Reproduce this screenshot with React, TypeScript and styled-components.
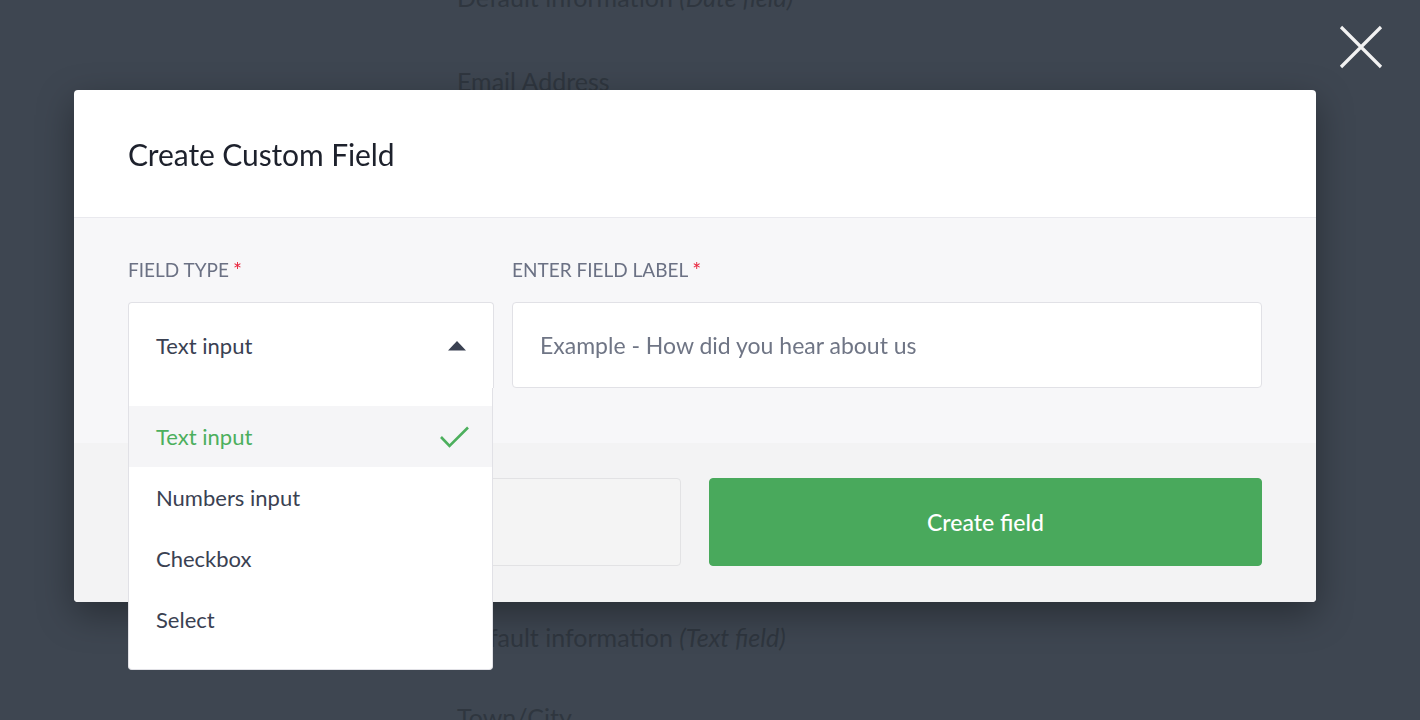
import React from "react";
import styled, { createGlobalStyle } from "styled-components";

const GlobalStyle = createGlobalStyle`
  html, body { margin: 0; padding: 0; }
  body {
    background: #3e4651;
    font-family: Lato, "Open Sans", sans-serif;
    overflow: hidden;
    width: 1420px;
    height: 720px;
  }
  * { box-sizing: border-box; }
`;

const Page = styled.div`
  display: flex;
  flex-direction: column;
  padding-left: 457px;
  margin-top: -17px;
`;

const BgLine = styled.div<{ $gap: number }>`
  font-size: 25px;
  line-height: 28px;
  color: #2f363f;
  margin-top: ${(p) => p.$gap}px;
  em { font-style: italic; }
`;

const Overlay = styled.div`
  position: fixed;
  inset: 0;
  display: flex;
  justify-content: flex-start;
  align-items: flex-start;
  padding: 90px 0 0 74px;
`;

const CloseButton = styled.button`
  position: absolute;
  top: 24px;
  right: 36px;
  width: 46px;
  height: 46px;
  padding: 0;
  border: none;
  background: transparent;
  display: flex;
  align-items: center;
  justify-content: center;
`;

const Modal = styled.div`
  width: 1242px;
  background: #fff;
  border-radius: 4px;
  box-shadow: 0 12px 36px rgba(0, 0, 0, 0.35);
  display: flex;
  flex-direction: column;
`;

const Header = styled.div`
  height: 128px;
  padding: 0 54px;
  display: flex;
  align-items: center;
  border-bottom: 1px solid #e9e9ee;
`;

const Title = styled.h2`
  margin: 0;
  font-size: 30px;
  font-weight: 400;
  color: #1d212c;
  letter-spacing: -0.1px;
`;

const Body = styled.div`
  background: #f7f7f9;
  padding: 42px 54px 55px;
  display: grid;
  grid-template-columns: 366px 750px;
  column-gap: 18px;
`;

const FieldColumn = styled.div`
  display: flex;
  flex-direction: column;
  gap: 22px;
`;

const Label = styled.label`
  font-size: 19px;
  line-height: 20px;
  color: #6b7184;
  text-transform: uppercase;
  display: flex;
  gap: 4px;
`;

const Req = styled.span`
  color: #e8253d;
  font-size: 21px;
`;

const SelectWrap = styled.div`
  position: relative;
`;

const SelectBox = styled.div`
  height: 86px;
  background: #fff;
  border: 1px solid #e1e1e6;
  border-bottom: none;
  border-radius: 4px 4px 0 0;
  padding: 0 27px 0 27px;
  display: flex;
  align-items: center;
  justify-content: space-between;
  font-size: 22px;
  color: #3a4152;
`;

const Dropdown = styled.ul`
  position: absolute;
  top: 100%;
  left: 0;
  width: 365px;
  margin: 0;
  padding: 18px 0 19px;
  list-style: none;
  background: #fff;
  border: 1px solid #e1e1e6;
  border-top: none;
  border-radius: 0 0 4px 4px;
  z-index: 5;
`;

const Option = styled.li<{ $active?: boolean }>`
  height: 61px;
  padding: 0 22px 0 27px;
  display: flex;
  align-items: center;
  justify-content: space-between;
  font-size: 22px;
  color: ${(p) => (p.$active ? "#4caf5d" : "#3a4152")};
  background: ${(p) => (p.$active ? "#f5f5f7" : "transparent")};
`;

const TextInput = styled.input`
  height: 86px;
  width: 100%;
  background: #fff;
  border: 1px solid #e1e1e6;
  border-radius: 4px;
  padding: 0 27px;
  font-family: inherit;
  font-size: 23px;
  color: #3a4152;
  outline: none;
  &::placeholder { color: #6f7585; }
`;

const Footer = styled.div`
  background: #f3f3f4;
  padding: 35px 54px 36px;
  display: grid;
  grid-template-columns: 1fr 1fr;
  column-gap: 28px;
  border-radius: 0 0 4px 4px;
`;

const Button = styled.button<{ $primary?: boolean }>`
  height: 88px;
  border-radius: 4px;
  font-family: inherit;
  font-size: 23px;
  font-weight: 500;
  border: 1px solid ${(p) => (p.$primary ? "#49a95c" : "#e2e2e4")};
  background: ${(p) => (p.$primary ? "#49a95c" : "#f4f4f4")};
  color: ${(p) => (p.$primary ? "#ffffff" : "#3a4152")};
`;

const options = ["Text input", "Numbers input", "Checkbox", "Select"];

export default function App() {
  return (
    <>
      <GlobalStyle />
      <Page>
        <BgLine $gap={0}>
          Default information <em>(Date field)</em>
        </BgLine>
        <BgLine $gap={56}>Email Address</BgLine>
        <BgLine $gap={528}>
          Default information <em>(Text field)</em>
        </BgLine>
        <BgLine $gap={52}>Town/City</BgLine>
      </Page>
      <Overlay>
        <CloseButton aria-label="Close">
          <svg width="46" height="46" viewBox="0 0 46 46">
            <path d="M3 3 L43 43 M43 3 L3 43" stroke="#f2f2f2" strokeWidth="3.2" />
          </svg>
        </CloseButton>
        <Modal>
          <Header>
            <Title>Create Custom Field</Title>
          </Header>
          <Body>
            <FieldColumn>
              <Label>
                Field Type<Req>*</Req>
              </Label>
              <SelectWrap>
                <SelectBox>
                  <span>Text input</span>
                  <svg width="18" height="10" viewBox="0 0 18 10">
                    <path d="M9 0 L18 9.5 L0 9.5 Z" fill="#3a4152" />
                  </svg>
                </SelectBox>
                <Dropdown>
                  {options.map((o, i) => (
                    <Option key={o} $active={i === 0}>
                      <span>{o}</span>
                      {i === 0 && (
                        <svg width="30" height="22" viewBox="0 0 30 22">
                          <path d="M1 11 L9.5 20 L28 1.5" fill="none" stroke="#4caf5d" strokeWidth="2.6" />
                        </svg>
                      )}
                    </Option>
                  ))}
                </Dropdown>
              </SelectWrap>
            </FieldColumn>
            <FieldColumn>
              <Label>
                Enter Field Label<Req>*</Req>
              </Label>
              <TextInput placeholder="Example - How did you hear about us" />
            </FieldColumn>
          </Body>
          <Footer>
            <Button>Cancel</Button>
            <Button $primary>Create field</Button>
          </Footer>
        </Modal>
      </Overlay>
    </>
  );
}
